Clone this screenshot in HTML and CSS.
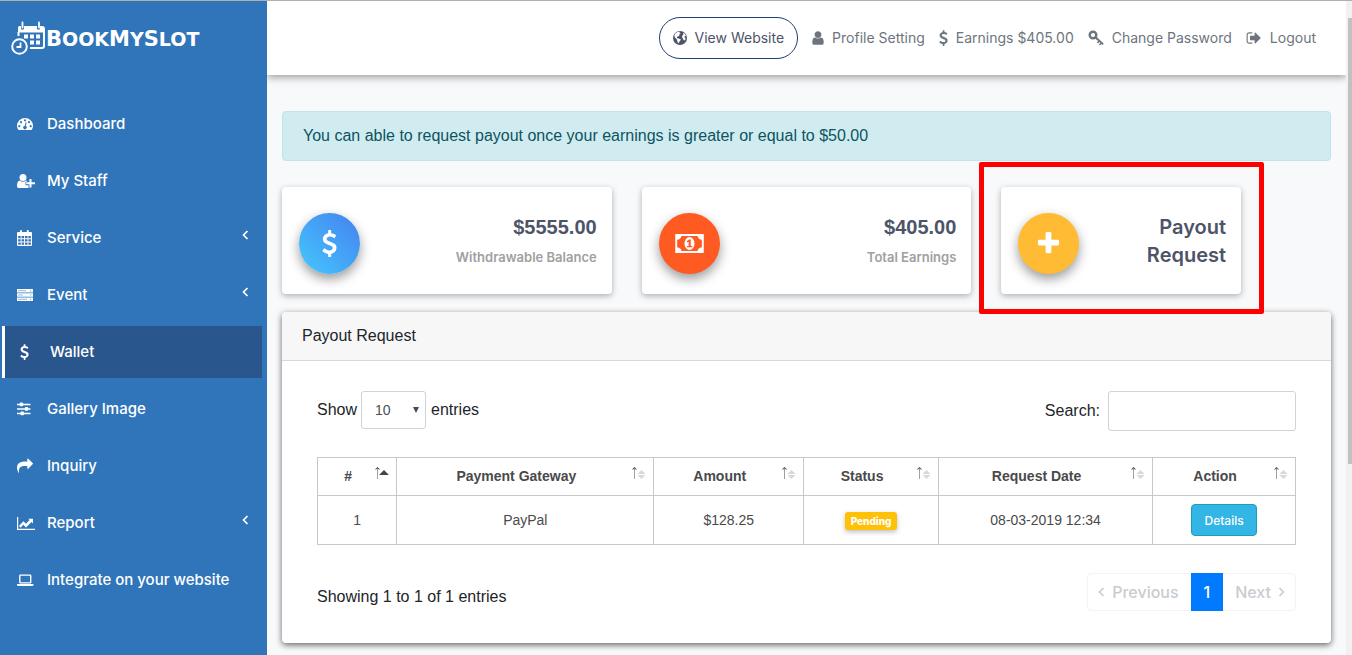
FILE: index.html
```html
<!DOCTYPE html>
<html lang="en">
<head>
<meta charset="utf-8">
<title>BookMySlot - Wallet</title>
<link rel="stylesheet" href="styles.css">
</head>
<body>
<svg class="sprite" aria-hidden="true">
  <symbol id="i-user" viewBox="256 0 1280 1792"><path d="M1536 1399q0 109-62.500 187t-150.500 78h-854q-88 0-150.500-78t-62.500-187q0-85 8.500-160.500t31.500-152 58.500-131 94-89 134.500-34.500q131 128 313 128t313-128q76 0 134.500 34.500t94 89 58.500 131 31.500 152 8.500 160.500zm-256-887q0 159-112.500 271.500t-271.500 112.500-271.500-112.500-112.500-271.500 112.500-271.500 271.500-112.500 271.500 112.500 112.500 271.500z"/></symbol>
  <symbol id="i-share" viewBox="0 0 1792 1792"><path d="M1792 640q0 26-19 45l-512 512q-19 19-45 19t-45-19-19-45v-256h-224q-98 0-175.500 6t-154 21.500-133 42.500-105.500 69.500-80 101-48.500 138.500-17.500 181q0 55 5 123 0 6 2.500 23.500t2.500 26.500q0 15-8.500 25t-23.500 10q-16 0-28-17-7-9-13-22t-13.500-30-10.500-24q-127-285-127-451 0-199 53-333 162-403 875-403h224v-256q0-26 19-45t45-19 45 19l512 512q19 19 19 45z"/></symbol>
  <symbol id="i-plus" viewBox="0 0 1792 1792"><path d="M1600 736v192q0 40-28 68t-68 28h-416v416q0 40-28 68t-68 28h-192q-40 0-68-28t-28-68v-416h-416q-40 0-68-28t-28-68v-192q0-40 28-68t68-28h416v-416q0-40 28-68t68-28h192q40 0 68 28t28 68v416h416q40 0 68 28t28 68z"/></symbol>
  <symbol id="i-dollar" viewBox="384 0 1024 1792"><path d="M1362 1185q0 153-99.500 263.500t-258.500 136.500v175q0 14-9 23t-23 9h-135q-13 0-22.500-9.500t-9.500-22.500v-175q-66-9-127.500-31t-101.500-44.500-74-48-46.500-37.500-17.500-18q-17-21-2-41l103-135q7-10 23-12 15-2 24 9l2 2q113 99 243 125 37 8 74 8 81 0 142.500-43t61.500-122q0-28-15-53t-33.500-42-58.500-37.500-66-32-80-32.500q-39-16-61.500-25t-61.500-26.500-62.500-31-56.500-35.500-53.500-42.500-43.500-49-35.500-58-21-66.500-8.500-78q0-138 98-242t255-134v-180q0-13 9.500-22.500t22.500-9.500h135q14 0 23 9t9 23v176q57 6 110.500 23t87 33.500 63.500 37.500 39 29 15 14q17 18 5 38l-81 146q-8 15-23 16-14 3-27-7-3-3-14.500-12t-39-26.500-58.500-32-74.500-26-85.500-11.500q-95 0-155 43t-60 111q0 26 8.500 48t29.500 41.500 39.500 33 56 31 60.500 27 70 27.500q53 20 81 31.500t76 35 75.500 42.500 62 50 53 63.500 31.500 76.500 13 94z"/></symbol>
  <symbol id="i-logout" viewBox="0 0 1792 1792"><path d="M704 1440q0 4 1 20t.5 26.500-3 23.500-10 19.500-20.500 6.500h-320q-119 0-203.500-84.500t-84.500-203.500v-704q0-119 84.500-203.500t203.500-84.500h320q13 0 22.500 9.500t9.500 22.500q0 4 1 20t.5 26.500-3 23.500-10 19.500-20.500 6.500h-320q-66 0-113 47t-47 113v704q0 66 47 113t113 47h312l11.500 1 11.500 3 8 5.500 7 9 2 13.500zm928-544q0 26-19 45l-544 544q-19 19-45 19t-45-19-19-45v-288h-448q-26 0-45-19t-19-45v-384q0-26 19-45t45-19h448v-288q0-26 19-45t45-19 45 19l544 544q19 19 19 45z"/></symbol>
  <symbol id="i-gauge" viewBox="0 0 18 16"><path fill-rule="evenodd" d="M1.500 14C.5 12.700 0 11.200 0 9.800a8 7.800 0 0 1 16 0c0 1.400-.5 2.900-1.500 4.200zM2.300 9a1.100 1.100 0 1 0 .01 0zM4 5a1.100 1.100 0 1 0 .01 0zM8 3.200a1.100 1.100 0 1 0 .01 0zM12 5a1.100 1.100 0 1 0 .01 0zM13.700 9a1.100 1.100 0 1 0 .01 0zM8.600 6.200 7.700 9.900a1.700 1.700 0 1 0 1.100.2l.8-3.600z"/></symbol>
  <symbol id="i-user-plus" viewBox="0 0 18 16"><path d="M6 1a3.500 3.500 0 0 1 0 7 3.500 3.500 0 0 1 0-7zM2.900 7.400a4.500 4.500 0 0 0 6.200 0h.7v1.300h-1.300v3.600h3V15H1.800C.6 15 0 14.200 0 12.700 0 9.600.9 7.400 2.900 7.400z"/><path d="M12.400 6h2.100v3.200H18v2.100h-3.500v3.200h-2.100v-3.200H9.200V9.200h3.200z"/></symbol>
  <symbol id="i-calendar" viewBox="0 0 18 16"><path fill-rule="evenodd" d="M1 2h2V.8Q3 0 4 0t1 .8V2h4.800V.8q0-.8 1-.8t1 .8V2H14q1 0 1 1v12q0 1-1 1H1q-1 0-1-1V3q0-1 1-1zM1.200 6h2.500v2.300H1.200zM4.600 6h2.500v2.300H4.600zM8 6h2.500v2.300H8zM11.400 6h2.500v2.300h-2.500zM1.200 9.200h2.500v2.300H1.200zM4.600 9.200h2.500v2.300H4.600zM8 9.200h2.500v2.300H8zM11.400 9.200h2.500v2.300h-2.500zM1.200 12.400h2.500v2.300H1.200zM4.600 12.400h2.500v2.300H4.600zM8 12.400h2.500v2.300H8zM11.400 12.400h2.500v2.300h-2.500z"/></symbol>
  <symbol id="i-server" viewBox="0 0 18 16"><path d="M0 2h16v3.500H0zM0 6.200h16v3.600H0zM0 10.500h16V14H0z"/><path stroke="#3075ba" stroke-width=".8" d="M1 3.700h8M1 8h5M1 12.300h9" opacity=".6"/><path fill="#3075ba" d="M13 3.200h1.200v1.200H13zM13 7.400h1.200v1.200H13zM13 11.700h1.200v1.200H13z" opacity=".6"/></symbol>
  <symbol id="i-sliders" viewBox="0 0 18 16"><path d="M0 2.800h13.500v1.400H0zM0 7.300h13.500v1.400H0zM0 11.800h13.500v1.400H0z"/><rect x="2.700" y="1.600" width="3.400" height="3.700" rx=".8"/><rect x="7.800" y="6.100" width="3.400" height="3.700" rx=".8"/><rect x="3.500" y="10.600" width="3.400" height="3.700" rx=".8"/></symbol>
  <symbol id="i-chart" viewBox="0 0 18 16"><path d="M0 2h1.200v11.800H18V15H0z"/><path d="m2 11 4.300-4.800L9 8.800 12.600 5l-1.400-1.300H16v4.800l-1.500-1.400L9 12.500 6.300 9.800 3.600 12.700z"/></symbol>
  <symbol id="i-laptop" viewBox="0 0 18 16"><path fill-rule="evenodd" d="M3.400 2.500h9.700q1.300 0 1.300 1.300v6.400q0 1.300-1.300 1.300H3.400q-1.300 0-1.300-1.300V3.800q0-1.300 1.300-1.300zm.1 1.200v6.500H13V3.700zM0 12h16.500v1.200q-.2.800-1.400.8H1.400Q.2 14 0 13.200z"/></symbol>
  <symbol id="i-globe" viewBox="1 1 14 14"><circle cx="8" cy="8" r="7"/><path fill="#fff" d="m3.200 3.600 2.400-1.500 2.300-.3-.4 1.400 1.400.6-1.700.8.1 1.400-1.600.3-1 1.600 1.900.5L9 9.600l-1.600 2.200-1.200 1.800-.8-2-.6-2.400L3 7.500l-.7-1.700zM11 2.700l1.800 1.100 1.100 1.900-1.600 1 1.200 1.500-.3 1.800-1.300.4-1.100-2-.8-1.400.4-1.600 1-.7z"/></symbol>
  <symbol id="i-key" viewBox="0 0 16 16"><circle cx="5" cy="5" r="3.300" fill="none" stroke="currentColor" stroke-width="2.400"/><path d="m7 8.400 1.500-1.600 7.300 7-1.300 1.300-1.100-1-1.500 1.500-1-1 1.400-1.600-1-.9-1.400 1.500-1-1L10.200 11z"/></symbol>
  <symbol id="i-money" viewBox="0 0 30 20"><path fill-rule="evenodd" d="M0 0h30v20H0zM6.500 2Q6 5.500 2 6v8q4 .5 4.500 4h17q.5-3.500 4.500-4V6q-4-.5-4.500-4z"/><ellipse cx="15" cy="10" rx="5.300" ry="6.800"/><path fill="#ff5a22" d="M14.300 5.800h2v6.800h1.600V14h-5.500v-1.400h1.700V8.200l-1.400.8-.7-1.200z"/></symbol>
  <symbol id="i-left" viewBox="0 0 8 12"><path fill="none" stroke="currentColor" stroke-width="1.700" d="M6.500 2 2.500 6l4 4"/></symbol>
  <symbol id="i-right" viewBox="0 0 8 12"><path fill="none" stroke="currentColor" stroke-width="1.700" d="m1.500 2 4 4-4 4"/></symbol>
  <symbol id="i-sort" viewBox="0 0 16 14"><path fill="none" stroke="#a8a098" d="M3.500 2v11"/><path fill="#444" d="m3.500 1 2.300 2.300-.6.500-1.700-1.500-1.700 1.500-.6-.5z"/><path fill="#d8d8d8" d="m10.500 4 4 4h-8zM6.500 9h8l-4 4z"/></symbol>
  <symbol id="i-sorted" viewBox="0 0 16 14"><path fill="none" stroke="#a8a098" d="M3.500 2v11"/><path fill="#444" d="m3.500 1 2.300 2.300-.6.500-1.700-1.500-1.700 1.500-.6-.5zM10 4l5 5H5z"/></symbol>
</svg>

<div class="app">
  <aside class="sidebar">
    <a class="logo" href="#">
      <svg class="logo-mark" viewBox="0 0 35 35" aria-hidden="true">
        <path fill="#fff" d="M8 5h2v3q1.500 1.500 3 0V5h13v3q1.500 1.500 3 0V5h2q3 0 3 3v3.500H7V8q0-3 1-3z"/>
        <path fill="none" stroke="#fff" stroke-width="1.800" stroke-linecap="round" d="M11.500 1.500v5M28 1.500v5"/>
        <path fill="none" stroke="#fff" stroke-width="2" d="M7.500 11v4M33 10v15q0 2-2 2H19"/>
        <path fill="#fff" d="M13 13.500h4v4h-4zM19 13.500h4v4h-4zM25 13.500h4v4h-4zM19 19.500h4v4h-4zM25 19.500h4v4h-4z"/>
        <circle cx="8.500" cy="25.500" r="7.300" fill="none" stroke="#fff" stroke-width="2"/>
        <path fill="none" stroke="#fff" stroke-width="1.800" d="M9.500 21.500V26H5.500"/>
      </svg>
      <span class="logo-text">B<small>OOK</small>M<small>Y</small>S<small>LOT</small></span>
    </a>
    <nav class="menu">
      <a href="#"><svg><use href="#i-gauge"/></svg><span>Dashboard</span></a>
      <a href="#"><svg><use href="#i-user-plus"/></svg><span>My Staff</span></a>
      <a href="#"><svg><use href="#i-calendar"/></svg><span>Service</span><svg class="caret"><use href="#i-left"/></svg></a>
      <a href="#"><svg><use href="#i-server"/></svg><span>Event</span><svg class="caret"><use href="#i-left"/></svg></a>
      <a href="#" class="active"><svg class="slim"><use href="#i-dollar"/></svg><span>Wallet</span></a>
      <a href="#"><svg><use href="#i-sliders"/></svg><span>Gallery Image</span></a>
      <a href="#"><svg class="square"><use href="#i-share"/></svg><span>Inquiry</span></a>
      <a href="#"><svg><use href="#i-chart"/></svg><span>Report</span><svg class="caret"><use href="#i-left"/></svg></a>
      <a href="#"><svg><use href="#i-laptop"/></svg><span>Integrate on your website</span></a>
    </nav>
  </aside>

  <div class="page">
    <header class="topbar">
      <a class="pill" href="#"><svg class="globe"><use href="#i-globe"/></svg>View Website</a>
      <a href="#"><svg class="person"><use href="#i-user"/></svg>Profile Setting</a>
      <a href="#"><svg class="slim"><use href="#i-dollar"/></svg>Earnings $405.00</a>
      <a href="#"><svg><use href="#i-key"/></svg>Change Password</a>
      <a href="#"><svg><use href="#i-logout"/></svg>Logout</a>
    </header>

    <main class="content">
      <div class="alert">You can able to request payout once your earnings is greater or equal to $50.00</div>

      <section class="stats">
        <div class="stat">
          <span class="disc blue"><svg><use href="#i-dollar"/></svg></span>
          <div class="figures"><strong>$5555.00</strong><span>Withdrawable Balance</span></div>
        </div>
        <div class="stat">
          <span class="disc orange"><svg class="money"><use href="#i-money"/></svg></span>
          <div class="figures"><strong>$405.00</strong><span>Total Earnings</span></div>
        </div>
        <div class="stat narrow">
          <span class="disc yellow"><svg><use href="#i-plus"/></svg></span>
          <a class="request" href="#">Payout Request</a>
          <span class="highlight"></span>
        </div>
      </section>

      <section class="panel">
        <h1>Payout Request</h1>
        <div class="panel-body">
          <div class="tools">
            <label>Show
              <select><option>10</option><option>25</option><option>50</option></select>
              entries</label>
            <label>Search: <input type="search"></label>
          </div>
          <table>
            <colgroup><col class="c-num"><col class="c-gateway"><col class="c-amount"><col class="c-status"><col class="c-date"><col class="c-action"></colgroup>
            <thead>
              <tr>
                <th>#<svg><use href="#i-sorted"/></svg></th>
                <th>Payment Gateway<svg><use href="#i-sort"/></svg></th>
                <th>Amount<svg><use href="#i-sort"/></svg></th>
                <th>Status<svg><use href="#i-sort"/></svg></th>
                <th>Request Date<svg><use href="#i-sort"/></svg></th>
                <th>Action<svg><use href="#i-sort"/></svg></th>
              </tr>
            </thead>
            <tbody>
              <tr>
                <td>1</td>
                <td>PayPal</td>
                <td>$128.25</td>
                <td><span class="badge">Pending</span></td>
                <td>08-03-2019 12:34</td>
                <td><button type="button" class="details">Details</button></td>
              </tr>
            </tbody>
          </table>
          <div class="table-foot">
            <p>Showing 1 to 1 of 1 entries</p>
            <nav class="pager">
              <button type="button" disabled><svg><use href="#i-left"/></svg>Previous</button>
              <button type="button" class="current">1</button>
              <button type="button" disabled>Next<svg><use href="#i-right"/></svg></button>
            </nav>
          </div>
        </div>
      </section>
    </main>
  </div>

  <div class="scrollbar"><span class="thumb"></span></div>
</div>
</body>
</html>
```
FILE: styles.css
```css
* { box-sizing: border-box; }

body {
  margin: 0;
  font-family: "Liberation Sans", Arial, sans-serif;
  font-size: 16px;
  line-height: 24px;
  color: #212529;
  background: #f8f9fb;
}

a { color: inherit; text-decoration: none; }
svg { fill: currentColor; flex: none; }
.sprite { position: absolute; width: 0; height: 0; }

.app {
  display: flex;
  height: 100vh;
  overflow: hidden;
  border-top: 1px solid #b0b0b0;
}

/* Sidebar */
.sidebar {
  position: relative;
  z-index: 1;
  flex: none;
  width: 267px;
  padding-top: 20px;
  color: #fff;
  background: #3075ba;
  font-family: Inter, "Work Sans", sans-serif;
}
.logo { display: flex; align-items: center; height: 35px; padding-left: 11px; }
.logo-mark { width: 35px; height: 35px; }
.logo-text { font: bold 21px/26px "DejaVu Sans", sans-serif; }
.logo-text small { font-size: 19px; }

.menu { display: flex; flex-direction: column; gap: 5px; padding: 42px 5px 0 2px; }
.menu a {
  display: flex;
  align-items: center;
  height: 52px;
  padding: 0 13px 0 15px;
  font-size: 15px;
  font-weight: 500;
}
.menu svg { width: 18px; height: 16px; margin-right: 12px; }
.menu .square { width: 16px; margin-right: 14px; }
.menu .slim { width: 9px; margin-right: 21px; }
.menu .caret { width: 8px; height: 12px; margin: 0 0 6px auto; }
.menu .active { border-left: 3px solid #fff; background: #2a568e; }

/* Header */
.page { flex: 1; min-width: 0; }
.topbar {
  display: flex;
  align-items: center;
  justify-content: flex-end;
  gap: 14px;
  height: 74px;
  padding-right: 30px;
  color: #6c757d;
  background: #fff;
  box-shadow: 0 2px 8px rgba(0, 0, 0, .4);
  font-family: Inter, "Work Sans", sans-serif;
  font-size: 14px;
}
.topbar a { display: flex; align-items: center; gap: 8px; white-space: nowrap; }
.topbar svg { width: 16px; height: 16px; }
.topbar .person { width: 12px; }
.topbar .slim { width: 9px; }
.topbar .globe { width: 14px; height: 14px; }
.topbar .pill {
  height: 42px;
  padding: 0 13px;
  border: 1px solid #1f3f6e;
  border-radius: 21px;
  color: #4d5468;
}

/* Content */
.content { padding: 36px 15px 0; }
.alert {
  height: 50px;
  padding: 12px 20px;
  border: 1px solid #bee5eb;
  border-radius: 4px;
  color: #0c5460;
  background: #d1ecf1;
}

.stats {
  display: grid;
  grid-template-columns: repeat(12, 1fr);
  gap: 30px;
  margin-top: 26px;
}
.stat {
  position: relative;
  grid-column: span 4;
  display: flex;
  justify-content: space-between;
  height: 107px;
  padding: 26px 15px 0 17px;
  border-radius: 4px;
  background: #fff;
  box-shadow: 0 2px 6px rgba(0, 0, 0, .3);
  font-family: Inter, "Work Sans", sans-serif;
}
.stat.narrow { grid-column: span 3; }
.disc {
  display: flex;
  align-items: center;
  justify-content: center;
  width: 61px;
  height: 61px;
  border-radius: 50%;
  color: #fff;
  box-shadow: 0 5px 12px rgba(0, 0, 0, .4);
}
.disc svg { width: 27px; height: 27px; }
.disc .money { width: 29px; height: 19px; }
.blue { background: linear-gradient(45deg, #45c8ff, #4481ee); }
.orange { background: #ff5a22; }
.yellow { background: #ffbb33; }
.figures { display: flex; flex-direction: column; align-items: flex-end; gap: 6px; }
.figures strong { font: bold 20px/28px "Liberation Sans", Arial, sans-serif; color: #4d5468; }
.figures span { font-size: 13px; line-height: 20px; font-weight: 600; color: #a0a0a0; }
.request {
  width: 100px;
  text-align: right;
  font-size: 20px;
  line-height: 28px;
  font-weight: 600;
  color: #4d5468;
}
.highlight {
  position: absolute;
  inset: -25px -23px -20px -22px;
  z-index: 1;
  border: 5px solid #f00;
  border-radius: 2px;
  pointer-events: none;
}

/* Panel */
.panel {
  margin-top: 18px;
  border-radius: 4px;
  background: #fff;
  box-shadow: 0 2px 6px rgba(0, 0, 0, .6);
}
.panel h1 {
  margin: 0;
  padding: 12px 20px;
  border-bottom: 1px solid #d8d8d8;
  border-radius: 4px 4px 0 0;
  font-size: 16px;
  line-height: 24px;
  font-weight: 400;
  background: #f7f7f7;
}
.panel-body { padding: 30px 35px 32px; }
.tools { display: flex; justify-content: space-between; align-items: flex-start; }
.tools label { display: flex; align-items: center; gap: 4px; }
.tools label + label { gap: 8px; }
.tools select, .tools input {
  border: 1px solid #ced4da;
  border-radius: 3px;
  background: #fff;
  color: #495057;
  font: 14px "Liberation Sans", Arial, sans-serif;
}
.tools select {
  appearance: none;
  width: 65px;
  height: 38px;
  margin-right: 1px;
  padding: 0 13px;
  background: #fff url("data:image/svg+xml,%3Csvg xmlns='http://www.w3.org/2000/svg' width='6' height='6'%3E%3Cpath fill='%23444b52' d='M0 0h6L3 6z'/%3E%3C/svg%3E") no-repeat right 6px center;
}
.tools input { width: 188px; height: 40px; }

table {
  width: 100%;
  margin-top: 26px;
  border-collapse: collapse;
  table-layout: fixed;
  font-size: 14px;
  color: #4a4a4a;
  text-align: center;
}
.c-num { width: 8.1%; }
.c-gateway { width: 26.3%; }
.c-amount { width: 15.3%; }
.c-status { width: 13.8%; }
.c-date { width: 21.9%; }
.c-action { width: 14.6%; }
th, td { border: 1px solid #c8c8c8; }
th { position: relative; height: 38px; padding: 0 24px 2px 6px; }
th svg { position: absolute; top: 8px; right: 6px; width: 16px; height: 14px; }
td { height: 49px; padding: 0; }
.badge {
  display: inline-block;
  padding: 0 6px;
  border-radius: 3px;
  color: #fff;
  background: #ffc107;
  box-shadow: 0 2px 5px rgba(0, 0, 0, .25);
  font: 800 10px/18px Inter, "Work Sans", sans-serif;
}
.details {
  width: 66px;
  height: 32px;
  padding: 0;
  border: 1px solid #17a2b8;
  border-radius: 4px;
  color: #fff;
  background: #33b5e5;
  font: 500 12px Inter, "Work Sans", sans-serif;
}

.table-foot { display: flex; justify-content: space-between; margin-top: 28px; }
.table-foot p { margin: 12px 0 0; }
.pager { display: flex; height: 38px; border: 1px solid #f1f3f5; border-radius: 4px; }
.pager button {
  display: flex;
  align-items: center;
  gap: 7px;
  margin: 0;
  padding: 0 12px 0 9px;
  border: 0;
  background: none;
  color: #c8ccd0;
  font: 500 16px Inter, "Work Sans", sans-serif;
}
.pager button:last-child { padding: 0 9px 0 12px; }
.pager svg { width: 8px; height: 12px; }
.pager .current { margin: -1px 0; padding: 0 13px; color: #fff; background: #007bff; }

/* Scrollbar */
.scrollbar {
  display: flex;
  flex: none;
  width: 6px;
  padding: 17px 0 0 2px;
  background: #f1f1f1;
}
.thumb { width: 4px; height: 70%; background: #c1c1c1; }
```
